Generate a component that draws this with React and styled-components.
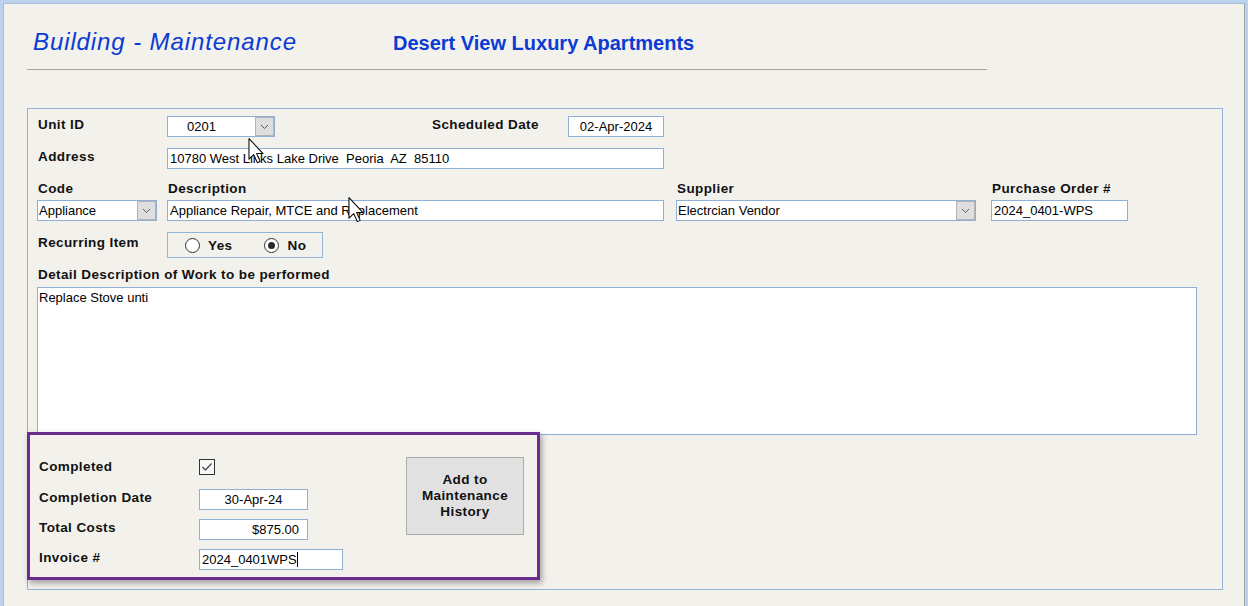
import styled, { createGlobalStyle } from "styled-components";

const GlobalStyle = createGlobalStyle`
  html, body {
    margin: 0;
    padding: 0;
    background: #f3f1ec;
  }
  body {
    font-family: "Liberation Sans", Arial, sans-serif;
    overflow: hidden;
  }
`;

const Frame = styled.div`
  width: 1248px;
  height: 606px;
  box-sizing: border-box;
  border: 3px solid #bcd3ee;
  border-bottom: none;
  background: #f3f1ec;
`;

const Inner = styled.div`
  height: 100%;
  box-sizing: border-box;
  border-left: 1px solid #a7bcd6;
  border-top: 1px solid #a7bcd6;
  border-right: 1px solid #a3a3a3;
  padding: 25px 0 0 23px;
`;

const TitleRow = styled.div`
  display: flex;
  align-items: baseline;
  height: 26px;
`;

const Title = styled.div`
  width: 366px;
  box-sizing: border-box;
  padding-left: 6px;
  font-size: 24px;
  line-height: 26px;
  font-style: italic;
  letter-spacing: 0.9px;
  color: #0a3bd3;
`;

const Subtitle = styled.div`
  font-size: 20px;
  line-height: 26px;
  font-weight: bold;
  color: #0a3bd3;
`;

const Divider = styled.div`
  margin-top: 14px;
  width: 960px;
  height: 1px;
  background: #a4a49c;
`;

const Panel = styled.div`
  position: relative;
  margin-top: 38px;
  width: 1196px;
  box-sizing: border-box;
  border: 1px solid #94b3da;
  padding: 7px 0 9px 9px;
`;

const Row = styled.div`
  display: flex;
  align-items: ${(p) => p.$align || "center"};
  margin-top: ${(p) => p.$mt || 0}px;
`;

const Label = styled.div`
  box-sizing: border-box;
  width: ${(p) => (p.$w ? `${p.$w}px` : "auto")};
  margin-left: ${(p) => p.$ml || 0}px;
  margin-top: ${(p) => p.$mt || 0}px;
  padding-left: ${(p) => p.$pl || 0}px;
  padding-top: ${(p) => p.$pt || 0}px;
  padding-bottom: ${(p) => p.$pb || 0}px;
  font-size: 13.5px;
  line-height: 16px;
  font-weight: bold;
  letter-spacing: 0.4px;
  color: #111;
  white-space: nowrap;
`;

const Box = styled.div`
  box-sizing: border-box;
  width: ${(p) => p.$w}px;
  height: 21px;
  border: 1px solid #8fafd6;
  background: #fff;
  padding: 0 ${(p) => p.$pr || 2}px 0 2px;
  font-size: 13px;
  line-height: 19px;
  color: #000;
  text-align: ${(p) => p.$align || "left"};
  white-space: nowrap;
  overflow: hidden;
`;

const Caret = styled.span`
  display: inline-block;
  width: 1px;
  height: 15px;
  background: #000;
  vertical-align: -3px;
`;

const Combo = styled.div`
  box-sizing: border-box;
  display: flex;
  width: ${(p) => p.$w}px;
  height: 21px;
  border: 1px solid #8fafd6;
  background: #fff;
`;

const ComboText = styled.div`
  flex: 1;
  padding-left: ${(p) => p.$pl || 1}px;
  font-size: 13px;
  line-height: 19px;
  color: #000;
  white-space: nowrap;
  overflow: hidden;
`;

const DropButton = styled.div`
  box-sizing: border-box;
  width: 19px;
  height: 19px;
  background: #dedede;
  border: 1px solid #b3b3b3;
  display: flex;
  align-items: center;
  justify-content: center;
`;

const Column = styled.div`
  display: flex;
  flex-direction: column;
  gap: 3px;
  margin-left: ${(p) => p.$ml || 0}px;
`;

const RadioGroup = styled.div`
  box-sizing: border-box;
  width: 156px;
  height: 26px;
  border: 1px solid #94b3da;
  display: flex;
  align-items: center;
  padding-left: 17px;
`;

const RadioOption = styled.div`
  display: flex;
  align-items: center;
  gap: 8px;
  margin-left: ${(p) => p.$ml || 0}px;
  font-size: 13.5px;
  font-weight: bold;
  letter-spacing: 0.4px;
  color: #111;
`;

const RadioCircle = styled.span`
  box-sizing: border-box;
  width: 15px;
  height: 15px;
  border-radius: 50%;
  border: 1px solid #333;
  background: #fff;
  display: flex;
  align-items: center;
  justify-content: center;
  &::after {
    content: "";
    display: ${(p) => (p.$checked ? "block" : "none")};
    width: 7px;
    height: 7px;
    border-radius: 50%;
    background: #2a2a2a;
  }
`;

const TextArea = styled.div`
  margin-top: 4px;
  width: 1160px;
  height: 148px;
  box-sizing: border-box;
  border: 1px solid #8fafd6;
  background: #fff;
  padding: 2px 1px;
  font-size: 13px;
  line-height: 16px;
  color: #000;
`;

const Highlight = styled.div`
  position: relative;
  margin: -3px 0 0 -10px;
  width: 513px;
  height: 148px;
  box-sizing: border-box;
  border: 3px solid #6b2c8f;
  box-shadow: 2px 3px 6px rgba(0, 0, 0, 0.35);
  padding: 24px 0 0 9px;
  display: flex;
  align-items: flex-start;
`;

const FieldStack = styled.div`
  display: flex;
  flex-direction: column;
  gap: 10px;
`;

const FieldRow = styled.div`
  display: flex;
  align-items: ${(p) => p.$align || "center"};
  height: 20px;
`;

const CheckBox = styled.div`
  box-sizing: border-box;
  width: 16px;
  height: 16px;
  border: 1px solid #333;
  background: #f7f7f7;
  display: flex;
  align-items: center;
  justify-content: center;
`;

const ActionButton = styled.div`
  box-sizing: border-box;
  margin: -2px 0 0 63px;
  width: 118px;
  height: 78px;
  background: #e1e1e1;
  border: 1px solid #adadad;
  display: flex;
  align-items: center;
  justify-content: center;
  text-align: center;
  font-size: 13.5px;
  line-height: 16px;
  font-weight: bold;
  letter-spacing: 0.4px;
  color: #111;
`;

const Cursor = styled.svg`
  position: absolute;
  left: ${(p) => p.$x}px;
  top: ${(p) => p.$y}px;
  z-index: 5;
`;

function Chevron() {
  return (
    <svg width="9" height="6" viewBox="0 0 9 6">
      <path d="M1 1 L4.5 4.5 L8 1" fill="none" stroke="#5a5a5a" strokeWidth="1" />
    </svg>
  );
}

function Pointer({ x, y }) {
  return (
    <Cursor $x={x} $y={y} width="17" height="26" viewBox="0 0 12 19">
      <path
        d="M0.5 0.5 L0.5 15.5 L4 12.2 L6.6 18 L8.7 17.1 L6.1 11.4 L10.8 11.4 Z"
        fill="#fff"
        stroke="#000"
        strokeWidth="0.75"
        strokeLinejoin="round"
      />
    </Cursor>
  );
}

function App() {
  return (
    <Frame>
      <GlobalStyle />
      <Inner>
        <TitleRow>
          <Title>Building - Maintenance</Title>
          <Subtitle>Desert View Luxury Apartments</Subtitle>
        </TitleRow>
        <Divider />

        <Panel>
          <Row>
            <Label $w={130} $pl={1} $pb={4}>Unit ID</Label>
            <Combo $w={108}>
              <ComboText $pl={19}>0201</ComboText>
              <DropButton>
                <Chevron />
              </DropButton>
            </Combo>
            <Label $w={136} $ml={157} $pb={4}>Scheduled Date</Label>
            <Box $w={96} $align="center">02-Apr-2024</Box>
          </Row>

          <Row $mt={11}>
            <Label $w={130} $pl={1} $pb={4}>Address</Label>
            <Box $w={497}>10780 West Links Lake Drive&nbsp; Peoria&nbsp; AZ&nbsp; 85110</Box>
          </Row>

          <Row $mt={12} $align="flex-start">
            <Column>
              <Label $pl={1}>Code</Label>
              <Combo $w={120}>
                <ComboText>Appliance</ComboText>
                <DropButton>
                  <Chevron />
                </DropButton>
              </Combo>
            </Column>
            <Column $ml={10}>
              <Label $pl={1}>Description</Label>
              <Box $w={497}>Appliance Repair, MTCE and Replacement</Box>
            </Column>
            <Column $ml={12}>
              <Label $pl={1}>Supplier</Label>
              <Combo $w={300}>
                <ComboText>Electrcian Vendor</ComboText>
                <DropButton>
                  <Chevron />
                </DropButton>
              </Combo>
            </Column>
            <Column $ml={15}>
              <Label $pl={1}>Purchase Order #</Label>
              <Box $w={137}>2024_0401-WPS</Box>
            </Column>
          </Row>

          <Row $mt={11} $align="flex-start">
            <Label $w={130} $pl={1} $pt={3}>Recurring Item</Label>
            <RadioGroup>
              <RadioOption>
                <RadioCircle />
                Yes
              </RadioOption>
              <RadioOption $ml={32}>
                <RadioCircle $checked />
                No
              </RadioOption>
            </RadioGroup>
          </Row>

          <Label $pl={1} $mt={9}>Detail Description of Work to be performed</Label>
          <TextArea>Replace Stove unti</TextArea>

          <Highlight>
            <FieldStack>
              <FieldRow $align="flex-start">
                <Label $w={160}>Completed</Label>
                <CheckBox>
                  <svg width="12" height="10" viewBox="0 0 12 10">
                    <path d="M1.5 5 L4.5 8 L10.5 1.5" fill="none" stroke="#4a4a4a" strokeWidth="1.3" />
                  </svg>
                </CheckBox>
              </FieldRow>
              <FieldRow>
                <Label $w={160} $pb={2}>Completion Date</Label>
                <Box $w={109} $align="center">30-Apr-24</Box>
              </FieldRow>
              <FieldRow>
                <Label $w={160} $pb={3}>Total Costs</Label>
                <Box $w={109} $align="right" $pr={8}>$875.00</Box>
              </FieldRow>
              <FieldRow>
                <Label $w={160} $pb={3}>Invoice #</Label>
                <Box $w={144}>
                  2024_0401WPS
                  <Caret />
                </Box>
              </FieldRow>
            </FieldStack>
            <ActionButton>
              Add to
              <br />
              Maintenance
              <br />
              History
            </ActionButton>
          </Highlight>

          <Pointer x={220} y={29} />
          <Pointer x={320} y={88} />
        </Panel>
      </Inner>
    </Frame>
  );
}

export default App;
